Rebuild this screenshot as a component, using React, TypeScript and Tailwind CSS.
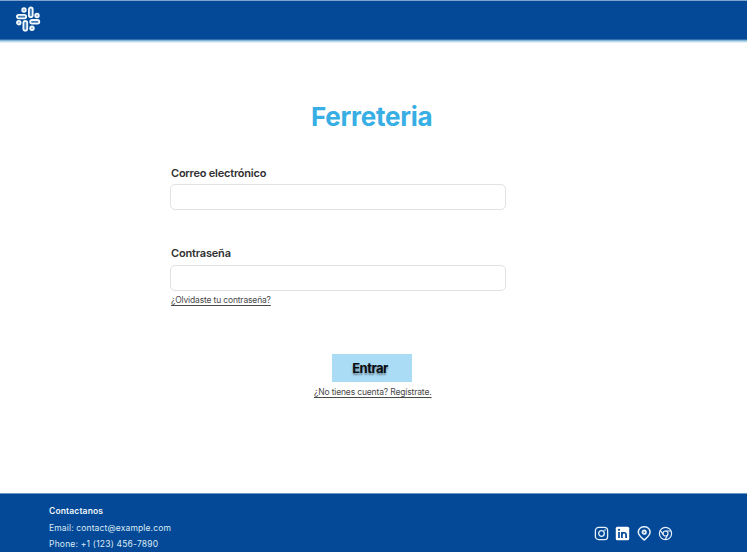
import React from "react";

function Logo() {
  return (
    <svg className="block h-[26px] w-[26px]" viewBox="0 0 26 26" fill="#3f7ab9" stroke="#f3f8fd" strokeWidth="1.8">
      <rect x="13.9" y="1.5" width="3.8" height="9.6" rx="1.9" />
      <rect x="1.9" y="8.8" width="9.3" height="3.6" rx="1.8" />
      <rect x="15.2" y="14" width="9.1" height="3.6" rx="1.8" />
      <rect x="8.4" y="15" width="3.8" height="9.6" rx="1.9" />
      <g fill="#7fa8d3">
        <circle cx="9" cy="4" r="1.8" />
        <circle cx="22" cy="9.5" r="1.8" />
        <circle cx="3.8" cy="16.7" r="1.8" />
        <circle cx="17" cy="22.2" r="1.8" />
      </g>
    </svg>
  );
}

function SocialIcons() {
  return (
    <div className="flex gap-[6.5px] text-[#e6f0fa]">
      <svg className="h-[15px] w-[15px]" viewBox="0 0 15 15" fill="none" stroke="currentColor" strokeWidth="1.3">
        <rect x="1.4" y="1.4" width="12.2" height="12.2" rx="3.2" />
        <circle cx="7.5" cy="7.5" r="2.8" />
        <circle cx="11" cy="4" r="0.8" fill="currentColor" stroke="none" />
      </svg>
      <svg className="h-[15px] w-[15px]" viewBox="0 0 15 15">
        <rect x="0.8" y="0.8" width="13.4" height="13.4" rx="1.5" fill="#ffffff" />
        <g fill="none" stroke="#034997" strokeWidth="1.7">
          <path d="M4 6v6M6.9 6v6M6.9 9c0-3 4.2-3 4.2 0v3" />
        </g>
        <circle cx="4" cy="3.8" r="1.1" fill="#034997" />
      </svg>
      <svg className="h-[15px] w-[15px]" viewBox="0 0 15 15" fill="none" stroke="currentColor" strokeWidth="1.5">
        <path d="M7.2 14C5 12 1.3 9.3 1.3 6.2a5.9 5.5 0 0 1 11.8 0C13.1 9.3 9.4 12 7.2 14Z" />
        <circle cx="7.2" cy="6.2" r="1.7" strokeWidth="1.8" />
      </svg>
      <svg className="h-[15px] w-[15px]" viewBox="0 0 15 15" fill="none" stroke="currentColor" strokeWidth="1.2">
        <circle cx="7.5" cy="7.5" r="6.1" />
        <circle cx="7.5" cy="7.5" r="2.5" />
        <path d="M7.5 5h5.5M5.3 8.7 2.3 4.3M9.7 8.7 7.2 13.6" />
      </svg>
    </div>
  );
}

export default function App() {
  return (
    <div className="flex h-[552px] w-[747px] flex-col overflow-hidden bg-white font-['Inter',sans-serif] text-[#303030]">
      <header className="h-[43px] shrink-0 border-t border-[#7fa3ca] bg-[linear-gradient(#034997_0_38px,#5c96c5_39px,#a9cfe5_40px,#f4f9fc_42px)] pt-[5px] pl-[15px]">
        <Logo />
      </header>
      <main className="flex h-[450px] shrink-0 flex-col">
        <h1 className="mt-[57px] ml-[311px] h-[34px] text-[26px] leading-[34px] font-bold tracking-[-0.26px] whitespace-nowrap text-[#37aee4]">Ferreteria</h1>
        <form className="ml-[170px] w-[336px]">
          <label className="mt-[31px] block h-[16px] pl-px text-[11px] leading-[16px] font-semibold tracking-[-0.22px]">Correo electrónico</label>
          <input className="mt-[3px] block h-[26px] w-full rounded-[5px] border border-[#e2e2e2] bg-white" />
          <label className="mt-[35px] block h-[16px] pl-px text-[11px] leading-[16px] font-semibold tracking-[-0.18px]">Contraseña</label>
          <input type="password" className="mt-[4px] block h-[26px] w-full rounded-[5px] border border-[#e2e2e2] bg-white" />
          <a className="mt-[3px] ml-px block h-[12px] w-fit text-[8.5px] leading-[12px] tracking-[-0.16px] whitespace-nowrap text-[#484848] underline underline-offset-2">¿Olvidaste tu contraseña?</a>
        </form>
        <button className="mt-[48px] ml-[332px] h-[28px] w-[80px] shrink-0 bg-[#abdcf6] pt-px pr-[4px] text-[13px] font-bold tracking-[-0.5px] text-[#080d10] [text-shadow:0_2px_2px_#0006]">Entrar</button>
        <a className="mt-[4px] ml-[314px] block h-[12px] w-fit text-[8.5px] leading-[12px] tracking-[-0.15px] whitespace-nowrap text-[#484848] underline underline-offset-2">¿No tienes cuenta? Regístrate.</a>
      </main>
      <footer className="flex h-[59px] shrink-0 justify-between border-t border-[#6f97c3] bg-[#034997] pl-[49px] text-[8.5px] text-[#dce9f6]">
        <div className="pt-[9px] leading-[16.5px] whitespace-nowrap">
          <p className="font-semibold tracking-[0.15px] text-[#f1f6fb]">Contactanos</p>
          <p className="tracking-[0.14px]">Email: contact@example.com</p>
          <p className="tracking-[0.2px]">Phone: +1 (123) 456-7890</p>
        </div>
        <div className="pt-[32px] pr-[74px]">
          <SocialIcons />
        </div>
      </footer>
    </div>
  );
}
